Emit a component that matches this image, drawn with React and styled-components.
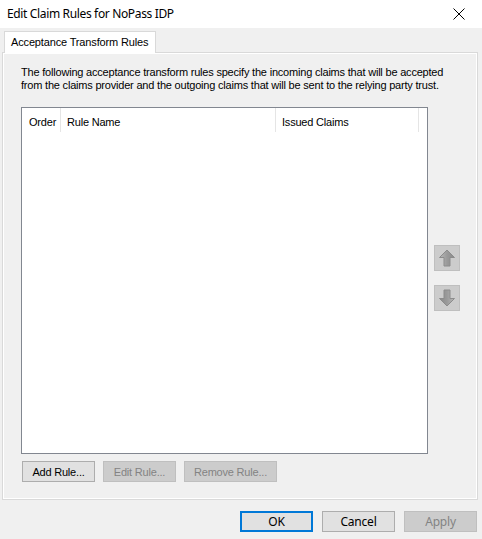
import React from "react";
import styled, { createGlobalStyle } from "styled-components";

const Global = createGlobalStyle`
  html, body {
    margin: 0;
    padding: 0;
    background: #f0f0f0;
  }
  * { box-sizing: border-box; }
`;

const Window = styled.div`
  width: 482px;
  height: 539px;
  display: flex;
  flex-direction: column;
  background: #f0f0f0;
  font-family: "Liberation Sans", Arial, sans-serif;
  font-size: 11px;
  letter-spacing: -0.2px;
  color: #000;
  overflow: hidden;
`;

const TitleBar = styled.div`
  height: 28px;
  flex-shrink: 0;
  background: #fff;
  display: flex;
  align-items: center;
  justify-content: space-between;
  padding: 0 0 2px 7px;
`;

const Title = styled.span`
  font-family: "Noto Sans", "Open Sans", sans-serif;
  font-size: 12px;
  letter-spacing: -0.35px;
`;

const CloseButton = styled.div`
  width: 46px;
  height: 28px;
  display: flex;
  align-items: center;
  justify-content: center;
  margin-top: 2px;
`;

const Body = styled.div`
  flex: 1;
  display: flex;
  flex-direction: column;
  padding: 3px 4px 0 2px;
`;

const TabStrip = styled.div`
  display: flex;
  padding-left: 2px;
  height: 21px;
  position: relative;
  z-index: 1;
`;

const Tab = styled.div`
  width: 152px;
  height: 22px;
  background: #fff;
  border: 1px solid #d9d9d9;
  border-bottom: none;
  padding: 4px 0 0 6px;
  letter-spacing: -0.15px;
`;

const Panel = styled.div`
  height: 448px;
  border: 1px solid #d9d9d9;
  background: #f0f0f0;
  box-shadow: inset 1px 1px 0 #fff, inset -1px -1px 0 #fff;
  display: flex;
  flex-direction: column;
  padding: 13px 0 0 18px;
`;

const Description = styled.p`
  margin: 0;
  line-height: 13px;
  white-space: nowrap;
`;

const ListRow = styled.div`
  display: flex;
  margin-top: 15px;
`;

const ListBox = styled.div`
  width: 407px;
  height: 347px;
  background: #fff;
  border: 1px solid #828790;
`;

const Header = styled.div`
  display: flex;
  height: 24px;
`;

const HeaderCell = styled.div`
  width: ${(p) => p.$w}px;
  padding: 8px 0 0 ${(p) => p.$pad}px;
  border-right: 1px solid #e5e5e5;
  white-space: nowrap;
`;

const ArrowColumn = styled.div`
  display: flex;
  flex-direction: column;
  gap: 14px;
  margin-left: 6px;
  padding-top: 138px;
`;

const ArrowButton = styled.div`
  width: 26px;
  height: 26px;
  background: #cccccc;
  border: 1px solid #bfbfbf;
  display: flex;
  align-items: center;
  justify-content: center;
`;

const ButtonRow = styled.div`
  display: flex;
  gap: 8px;
  margin-top: 7px;
  padding-left: 1px;
`;

const Button = styled.div`
  width: ${(p) => p.$w || 73}px;
  height: 21px;
  display: flex;
  align-items: center;
  justify-content: center;
  font-family: ${(p) => (p.$big ? '"Noto Sans", "Open Sans", sans-serif' : "inherit")};
  font-size: ${(p) => (p.$big ? 12 : 11)}px;
  background: ${(p) => (p.$disabled ? "#cccccc" : "#e1e1e1")};
  color: ${(p) => (p.$disabled ? "#838383" : "#000")};
  border: ${(p) =>
    p.$default ? "2px solid #0078d7" : p.$disabled ? "1px solid #bfbfbf" : "1px solid #adadad"};
`;

const Footer = styled.div`
  display: flex;
  justify-content: flex-end;
  gap: 9px;
  padding-top: 11px;
  padding-right: 1px;
`;

function Arrow({ down }) {
  const id = down ? "gd" : "gu";
  return (
    <svg width="16" height="18" viewBox="0 0 16 18" style={{ transform: down ? "rotate(180deg)" : "none" }}>
      <defs>
        <linearGradient id={id} x1="0" y1="0" x2="1" y2="0">
          <stop offset="0" stopColor="#b8b8b8" />
          <stop offset="0.5" stopColor="#9a9a9a" />
          <stop offset="1" stopColor="#8a8a8a" />
        </linearGradient>
      </defs>
      <path
        d="M8 1 L15.5 8.5 L11 8.5 L11 17 L5 17 L5 8.5 L0.5 8.5 Z"
        fill={`url(#${id})`}
        stroke="#8c8c8c"
        strokeWidth="1"
        strokeLinejoin="round"
      />
    </svg>
  );
}

export default function App() {
  return (
    <>
      <Global />
      <Window>
        <TitleBar>
          <Title>Edit Claim Rules for NoPass IDP</Title>
          <CloseButton>
            <svg width="12" height="12" viewBox="0 0 12 12">
              <path d="M0.5 0.5 L11.5 11.5 M11.5 0.5 L0.5 11.5" stroke="#000" strokeWidth="1" />
            </svg>
          </CloseButton>
        </TitleBar>
        <Body>
          <TabStrip>
            <Tab>Acceptance Transform Rules</Tab>
          </TabStrip>
          <Panel>
            <Description>
              The following acceptance transform rules specify the incoming claims that will be accepted
              <br />
              from the claims provider and the outgoing claims that will be sent to the relying party trust.
            </Description>
            <ListRow>
              <ListBox>
                <Header>
                  <HeaderCell $w={39} $pad={7}>Order</HeaderCell>
                  <HeaderCell $w={215} $pad={6}>Rule Name</HeaderCell>
                  <HeaderCell $w={143} $pad={6}>Issued Claims</HeaderCell>
                </Header>
              </ListBox>
              <ArrowColumn>
                <ArrowButton>
                  <Arrow />
                </ArrowButton>
                <ArrowButton>
                  <Arrow down />
                </ArrowButton>
              </ArrowColumn>
            </ListRow>
            <ButtonRow>
              <Button $w={73}>Add Rule...</Button>
              <Button $w={73} $disabled>Edit Rule...</Button>
              <Button $w={93} $disabled>Remove Rule...</Button>
            </ButtonRow>
          </Panel>
          <Footer>
            <Button $big $default>OK</Button>
            <Button $big>Cancel</Button>
            <Button $big $disabled>Apply</Button>
          </Footer>
        </Body>
      </Window>
    </>
  );
}
